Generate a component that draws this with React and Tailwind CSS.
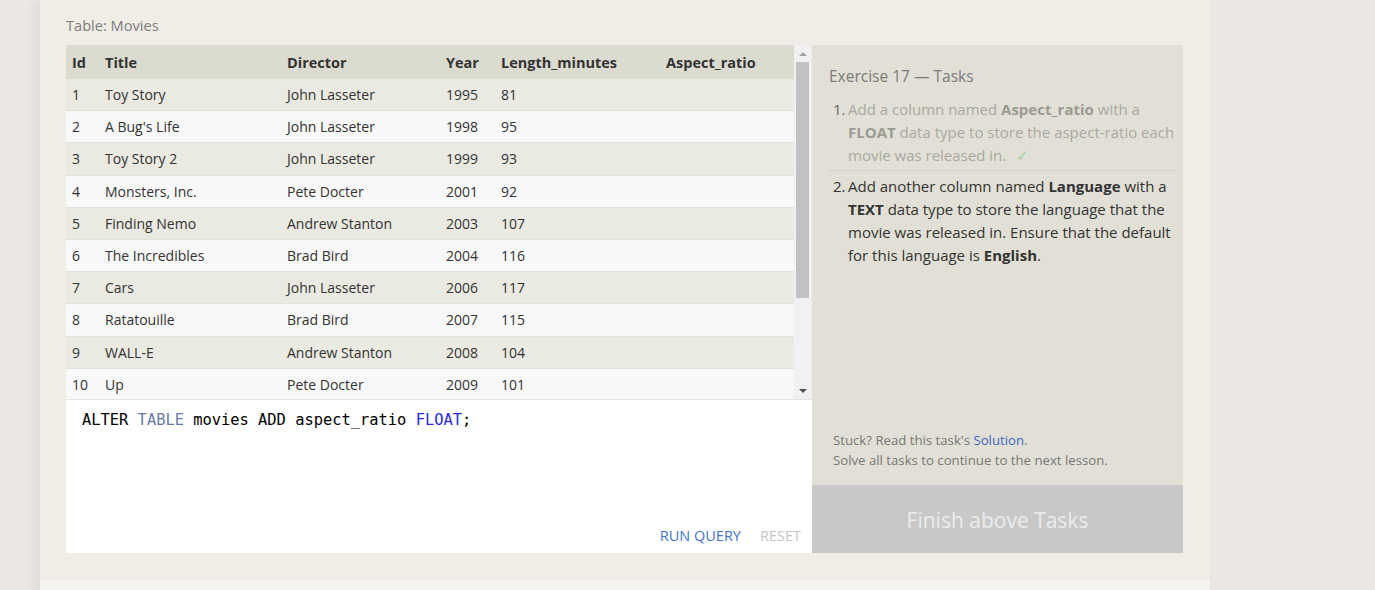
import React from "react";

const rows = [
  [1, "Toy Story", "John Lasseter", 1995, 81],
  [2, "A Bug's Life", "John Lasseter", 1998, 95],
  [3, "Toy Story 2", "John Lasseter", 1999, 93],
  [4, "Monsters, Inc.", "Pete Docter", 2001, 92],
  [5, "Finding Nemo", "Andrew Stanton", 2003, 107],
  [6, "The Incredibles", "Brad Bird", 2004, 116],
  [7, "Cars", "John Lasseter", 2006, 117],
  [8, "Ratatouille", "Brad Bird", 2007, 115],
  [9, "WALL-E", "Andrew Stanton", 2008, 104],
  [10, "Up", "Pete Docter", 2009, 101],
];

export default function App() {
  return (
    <div className="min-h-screen bg-[#ebe7e3] font-['Open_Sans',sans-serif]">
      <div className="ml-[40px] w-[1170px] bg-[#efede6] shadow-[-6px_0_10px_rgba(0,0,0,0.05)]">
        <div className="px-[26px] pt-[13px] pb-[27px]">
          <div className="h-[32px] text-[14.6px] leading-[24px] text-[#7d7d7d]">Table: Movies</div>
          <div className="flex">
            <div className="flex w-[746px] flex-col">
              <div className="flex h-[355px] overflow-hidden border-b border-[#e4e3de]">
                <div className="w-[728px] text-[14px] text-[#333]">
                  <div className="flex h-[34px] items-center bg-[#dcdbd0] pt-[1px] font-bold text-[14.5px]">
                    <div className="w-[33px] pl-[6px]">Id</div>
                    <div className="w-[182px] pl-[6px]">Title</div>
                    <div className="w-[159px] pl-[6px]">Director</div>
                    <div className="w-[55px] pl-[6px]">Year</div>
                    <div className="w-[165px] pl-[6px]">Length_minutes</div>
                    <div className="w-[134px] pl-[6px]">Aspect_ratio</div>
                  </div>
                  {rows.map((r, i) => (
                    <div
                      key={r[0]}
                      className={
                        "flex h-[32.2px] items-center border-b border-[#e2e1dc] " +
                        (i % 2 === 0 ? "bg-[#eae9e2]" : "bg-[#f8f8f8]")
                      }
                    >
                      <div className="w-[33px] pl-[6px]">{r[0]}</div>
                      <div className="w-[182px] pl-[6px]">{r[1]}</div>
                      <div className="w-[159px] pl-[6px]">{r[2]}</div>
                      <div className="w-[55px] pl-[6px]">{r[3]}</div>
                      <div className="w-[165px] pl-[6px]">{r[4]}</div>
                      <div className="w-[134px] pl-[6px]"></div>
                    </div>
                  ))}
                </div>
                <div className="flex w-[17px] flex-col items-center bg-[#f1f1f1]">
                  <div className="flex h-[17px] w-full items-center justify-center">
                    <div className="h-0 w-0 border-x-[4px] border-b-[4px] border-x-transparent border-b-[#a3a3a3]" />
                  </div>
                  <div className="h-[236px] w-[13px] bg-[#c1c1c1]" />
                  <div className="flex-1" />
                  <div className="flex h-[17px] w-full items-center justify-center">
                    <div className="h-0 w-0 border-x-[4px] border-t-[4px] border-x-transparent border-t-[#505050]" />
                  </div>
                </div>
              </div>
              <div className="flex h-[153px] flex-col bg-white">
                <div className="px-[16px] pt-[9px] font-['DejaVu_Sans_Mono',monospace] text-[15.4px] text-black">
                  ALTER <span className="text-[#6a7aa8]">TABLE</span> movies ADD aspect_ratio{" "}
                  <span className="text-[#2a2ae0]">FLOAT</span>;
                </div>
                <div className="flex-1" />
                <div className="flex justify-end gap-[19px] pr-[11px] pb-[6px] text-[14.5px]">
                  <span className="text-[#3f75c9]">RUN QUERY</span>
                  <span className="text-[#c5c5c5]">RESET</span>
                </div>
              </div>
            </div>
            <div className="flex w-[371px] flex-col bg-[#e2e0d6]">
              <div className="flex-1 pl-[17px] pr-[6px] pt-[20px]">
                <div className="text-[15.5px] leading-[22px] text-[#7a7a7a]">Exercise 17 — Tasks</div>
                <ol className="mt-[11px] text-[15px] leading-[23px]">
                  <li className="flex border-b border-[#d3d1c7] pb-[3px] text-[#a8a8a0]">
                    <span className="w-[19px] shrink-0 pl-[4px] text-[#666]">1.</span>
                    <span className="whitespace-nowrap">
                      Add a column named <b className="text-[#9a9a92]">Aspect_ratio</b> with a
                      <br />
                      <b className="text-[#9a9a92]">FLOAT</b> data type to store the aspect-ratio each
                      <br />
                      movie was released in. <span className="ml-[6px] text-[#9ed39e]">✓</span>
                    </span>
                  </li>
                  <li className="flex pt-[4px] text-[#333]">
                    <span className="w-[19px] shrink-0 pl-[4px]">2.</span>
                    <span className="whitespace-nowrap">
                      Add another column named <b>Language</b> with a
                      <br />
                      <b>TEXT</b> data type to store the language that the
                      <br />
                      movie was released in. Ensure that the default
                      <br />
                      for this language is <b>English</b>.
                    </span>
                  </li>
                </ol>
              </div>
              <div className="pl-[21px] pb-[15px] text-[13.2px] leading-[20px] text-[#777]">
                <div>
                  Stuck? Read this task's <span className="text-[#4064c4]">Solution</span>.
                </div>
                <div>Solve all tasks to continue to the next lesson.</div>
              </div>
              <div className="flex h-[68px] items-center justify-center bg-[#c8c8c8] pt-[3px] text-[21px] text-[#ececec]">
                Finish above Tasks
              </div>
            </div>
          </div>
        </div>
        <div className="h-[20px] bg-[#f5f4f0]" />
      </div>
    </div>
  );
}
